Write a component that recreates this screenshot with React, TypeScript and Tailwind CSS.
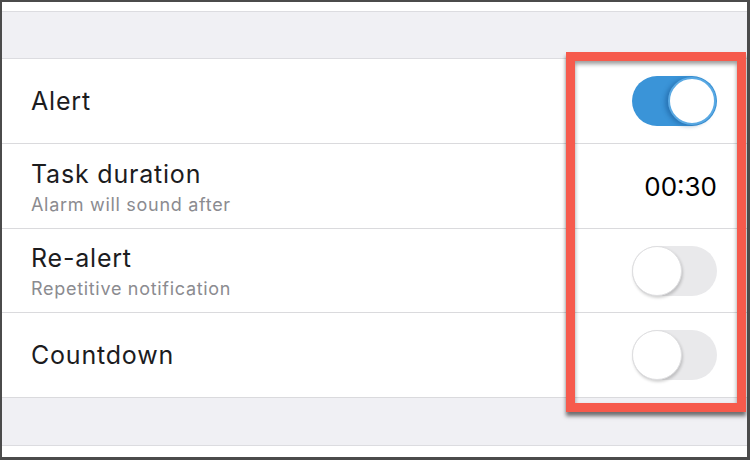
import React from "react";

const font = { fontFamily: "Inter, 'Noto Sans', sans-serif" };

function Toggle({ on }: { on: boolean }) {
  if (on) {
    return (
      <div className="relative w-[85px] h-[50px] rounded-full bg-[#3a94d8]">
        <div className="absolute right-[1px] top-[1px] w-[48px] h-[48px] rounded-full bg-white border-2 border-[#5aa9e3] shadow-[-3px_1px_4px_rgba(20,80,140,0.45)]" />
      </div>
    );
  }
  return (
    <div className="relative w-[85px] h-[50px] rounded-full bg-[#e9e9eb]">
      <div className="absolute left-0 top-0 w-[50px] h-[50px] rounded-full bg-white border border-[#dedee0] shadow-[1px_2px_3px_rgba(0,0,0,0.18)]" />
    </div>
  );
}

function Row({
  title,
  subtitle,
  right,
  h,
}: {
  title: string;
  subtitle?: string;
  right: React.ReactNode;
  h: string;
}) {
  return (
    <div className={`${h} border-b border-[#dadadd] flex items-center justify-between pl-[29px] pr-[30px] bg-white`}>
      <div className={`flex flex-col ${subtitle ? "pt-[2px]" : ""}`}>
        <div className="text-[25px] leading-[30px] text-[#1c1c1e] tracking-[0.8px]">{title}</div>
        {subtitle && (
          <div className="text-[18px] leading-[22px] text-[#8b8b90] mt-[5px] tracking-[0.7px]">{subtitle}</div>
        )}
      </div>
      {right}
    </div>
  );
}

export default function App() {
  return (
    <div
      style={font}
      className="relative w-[750px] h-[460px] border-l-2 border-t-2 border-r-[3px] border-b-[3px] border-[#4b4b4b] bg-white flex flex-col overflow-hidden"
    >
      <div className="h-[10px] bg-white border-b border-[#dcdce0] shrink-0" />
      <div className="h-[47px] bg-[#f0f0f4] border-b border-[#dcdce0] shrink-0" />
      <Row h="h-[85px] shrink-0" title="Alert" right={<Toggle on />} />
      <Row
        h="h-[85px] shrink-0"
        title="Task duration"
        subtitle="Alarm will sound after"
        right={<div className="text-[26px] text-black">00:30</div>}
      />
      <Row
        h="h-[84px] shrink-0"
        title="Re-alert"
        subtitle="Repetitive notification"
        right={<Toggle on={false} />}
      />
      <Row h="h-[85px] shrink-0" title="Countdown" right={<Toggle on={false} />} />
      <div className="h-[48px] bg-[#f0f0f4] border-b border-[#dcdce0] shrink-0" />
      <div className="flex-1 bg-white" />

      <div className="absolute left-[564px] top-[50px] w-[180px] h-[360px] border-[9px] border-[#f65a4c] shadow-[0_4px_4px_rgba(0,0,0,0.55),inset_0_3px_4px_rgba(0,0,0,0.4)]" />
    </div>
  );
}
